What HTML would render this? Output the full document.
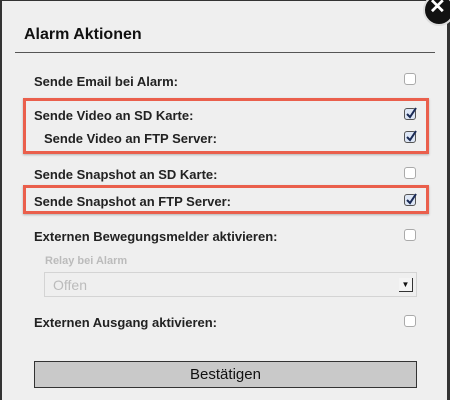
<!DOCTYPE html>
<html><head><meta charset="utf-8"><style>
*{margin:0;padding:0;box-sizing:border-box}
body{width:450px;height:400px;background:#efefef;position:relative;overflow:hidden;font-family:"Liberation Sans",Arial,sans-serif}
.frame{position:absolute;left:0;top:0;width:450px;height:400px;border-left:2px solid #333;border-right:3px solid #333;border-top:1px solid #333}
.t{position:absolute;font-weight:bold;font-size:13px;color:#222;line-height:14px}
.cb{position:absolute;width:12px;height:12px;border:1px solid #aaa;border-radius:3px;background:#fff}
.cb.on{border-color:#555;background:#dde6f5}
.cb.on svg{position:absolute;left:0;top:-2px}
.red{position:absolute;border:3px solid #ea5f4c;box-shadow:0 1px 2px rgba(0,0,0,.25)}
</style></head><body>
<div class="frame"></div>
<div style="position:absolute;left:24px;top:26px;font-weight:bold;font-size:16px;color:#111">Alarm Aktionen</div>
<div style="position:absolute;left:15px;top:52px;width:420px;height:1px;background:#555"></div>
<div style="position:absolute;left:423px;top:-6px;width:32px;height:32px;border-radius:50%;background:#111;border:2px solid #ddd"></div>
<div style="position:absolute;left:429px;top:-6px;color:#fff;font-weight:bold;font-size:20px">✕</div>

<div class="red" style="left:23px;top:98px;width:406px;height:56px"></div>
<div class="red" style="left:23px;top:185px;width:406px;height:29px"></div>

<div class="t" style="left:34px;top:75px">Sende Email bei Alarm:</div>
<div class="cb" style="left:404px;top:73px"></div>
<div class="t" style="left:34px;top:109px">Sende Video an SD Karte:</div>
<div class="cb on" style="left:404px;top:108px"><svg width="12" height="12" viewBox="0 0 12 12"><path d="M2 7l3 3 6-9" stroke="#1a2a55" stroke-width="2" fill="none"/></svg></div>
<div class="t" style="left:44px;top:132px">Sende Video an FTP Server:</div>
<div class="cb on" style="left:404px;top:131px"><svg width="12" height="12" viewBox="0 0 12 12"><path d="M2 7l3 3 6-9" stroke="#1a2a55" stroke-width="2" fill="none"/></svg></div>
<div class="t" style="left:34px;top:168px">Sende Snapshot an SD Karte:</div>
<div class="cb" style="left:404px;top:167px"></div>
<div class="t" style="left:34px;top:195px">Sende Snapshot an FTP Server:</div>
<div class="cb on" style="left:404px;top:194px"><svg width="12" height="12" viewBox="0 0 12 12"><path d="M2 7l3 3 6-9" stroke="#1a2a55" stroke-width="2" fill="none"/></svg></div>
<div class="t" style="left:34px;top:230px">Externen Bewegungsmelder aktivieren:</div>
<div class="cb" style="left:404px;top:229px"></div>
<div style="position:absolute;left:45px;top:255px;font-size:11px;font-weight:bold;color:#bbb">Relay bei Alarm</div>
<div style="position:absolute;left:44px;top:272px;width:373px;height:25px;border:1px solid #d4d4d4;background:#efefef;color:#bbb;font-size:14px;padding:4px 0 0 8px">Offen</div>
<div style="position:absolute;left:399px;top:278px;width:14px;height:14px;border-right:1px solid #333;border-bottom:1px solid #333;background:#f4f4f4;font-size:8px;text-align:center;line-height:13px;color:#111">▼</div>
<div class="t" style="left:34px;top:316px">Externen Ausgang aktivieren:</div>
<div class="cb" style="left:404px;top:315px"></div>
<div style="position:absolute;left:34px;top:361px;width:383px;height:27px;background:#c9c9c9;border:1px solid #333;text-align:center;font-size:15px;line-height:25px;color:#111">Bestätigen</div>
</body></html>
